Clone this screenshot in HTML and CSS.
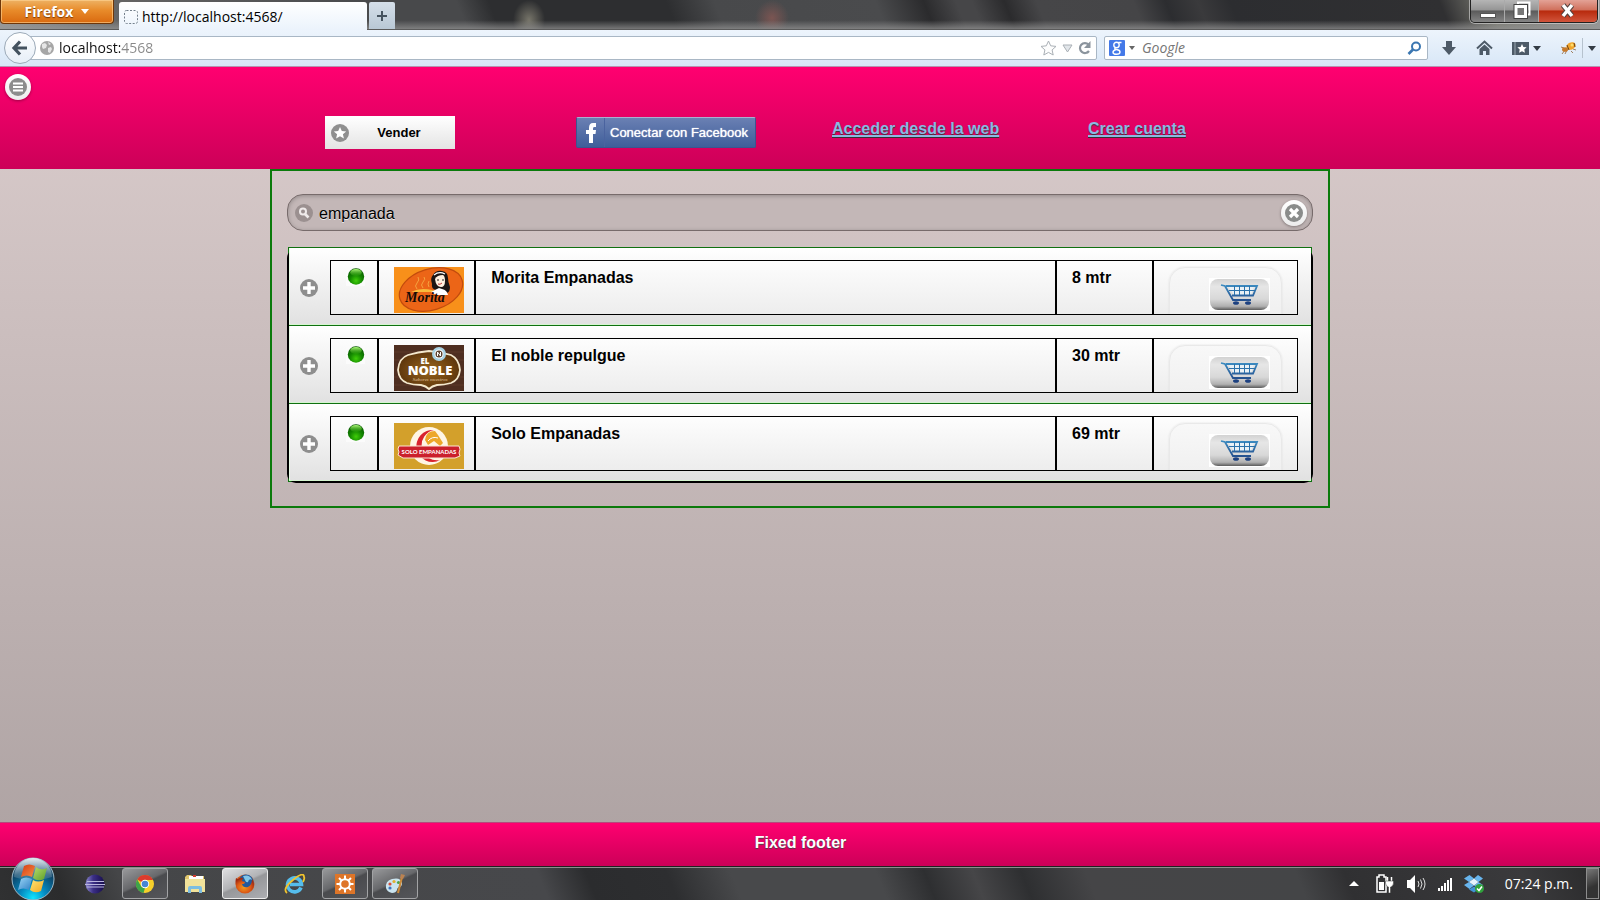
FILE: index.html
```html
<!DOCTYPE html>
<html lang="es">
<head>
<meta charset="utf-8">
<title>http://localhost:4568/</title>
<link rel="stylesheet" href="styles.css">
</head>
<body>
<svg class="defs" aria-hidden="true">
  <defs>
    <radialGradient id="g-ball" cx="50%" cy="75%" r="75%"><stop offset="0" stop-color="#3fce08"/><stop offset=".5" stop-color="#138600"/><stop offset="1" stop-color="#065400"/></radialGradient>
    <linearGradient id="g-shine" x2="0" y2="1"><stop offset="0" stop-color="#b5ff80"/><stop offset="1" stop-color="#38a811" stop-opacity=".2"/></linearGradient>
    <linearGradient id="g-btn" x2="0" y2="1"><stop offset="0" stop-color="#d2d2d2"/><stop offset=".25" stop-color="#e6e6e6"/><stop offset=".65" stop-color="#d8d8d8"/><stop offset=".88" stop-color="#b0b0b0"/><stop offset="1" stop-color="#5a5a5a"/></linearGradient>
    <linearGradient id="g-cart" gradientUnits="userSpaceOnUse" x1="0" y1="6" x2="0" y2="27"><stop offset="0" stop-color="#3d8fc4"/><stop offset="1" stop-color="#1d3f80"/></linearGradient>
    <radialGradient id="g-orb" cx="50%" cy="95%" r="90%"><stop offset="0" stop-color="#10e4ff"/><stop offset=".35" stop-color="#0589c0"/><stop offset=".75" stop-color="#0d4468"/><stop offset="1" stop-color="#5d7c90"/></radialGradient>
    <linearGradient id="g-orbtop" x2="0" y2="1"><stop offset="0" stop-color="#e4edf2"/><stop offset="1" stop-color="#6e97ad" stop-opacity=".25"/></linearGradient>
    <linearGradient id="g-ecl"><stop offset="0" stop-color="#8d88cf"/><stop offset=".4" stop-color="#3b2f86"/><stop offset="1" stop-color="#160c4c"/></linearGradient>
    <linearGradient id="g-red" x2="1" y2="1"><stop offset="0" stop-color="#d63d12"/><stop offset="1" stop-color="#f58b45"/></linearGradient>
    <linearGradient id="g-green" x2="1" y2="1"><stop offset="0" stop-color="#b6dc6b"/><stop offset="1" stop-color="#5c9e28"/></linearGradient>
    <linearGradient id="g-blue" x2="1" y2="1"><stop offset="0" stop-color="#9bd6f7"/><stop offset="1" stop-color="#2f7fc4"/></linearGradient>
    <linearGradient id="g-yellow" x2="1" y2="1"><stop offset="0" stop-color="#ffe474"/><stop offset="1" stop-color="#f4a71f"/></linearGradient>
    <radialGradient id="g-fox" cx="45%" cy="65%" r="60%"><stop offset="0" stop-color="#f09a1d"/><stop offset=".6" stop-color="#dc5a16"/><stop offset="1" stop-color="#a32a10"/></radialGradient>
    <radialGradient id="g-wood"><stop offset="0" stop-color="#99651c"/><stop offset="1" stop-color="#5f370d"/></radialGradient>
  </defs>
  <symbol id="ball" viewBox="0 0 19 19"><rect width="19" height="19" fill="#fbfbfb"/><circle cx="10" cy="9.500" r="8.200" fill="url(#g-ball)"/><ellipse cx="10" cy="5.500" rx="5.800" ry="3.600" fill="url(#g-shine)"/></symbol>
  <symbol id="cart" viewBox="0 0 61 33">
    <rect width="61" height="33" fill="#fff"/><rect x="1" y="1" width="59" height="31" rx="8" fill="url(#g-btn)"/>
    <path d="M19 8h26l-3 9H25z" fill="#e9f1f6"/>
    <path d="M12 7l4 1 8 14h18M17 8h31l-4 9.500H23" fill="none" stroke="url(#g-cart)" stroke-width="1.800"/>
    <path d="M20 12.500h26M25.500 8v9M30.500 8v9M35.500 8v9M40.500 8v9" stroke="#2b72ab" fill="none"/>
    <ellipse cx="27" cy="25" rx="3" ry="1.800" fill="#1d4180"/><ellipse cx="39" cy="25" rx="3" ry="1.800" fill="#1d4180"/>
  </symbol>
  <symbol id="plus" viewBox="0 0 18 18"><circle cx="9" cy="9" r="9" fill="#8e8e8e"/><path d="M9 3v12M3 9h12" stroke="#fff" stroke-width="3.400"/></symbol>
</svg>

<header class="titlebar">
  <button class="firefox">Firefox <span class="caret"></span></button>
  <div class="tab">
    <svg width="14" height="14" viewBox="0 0 14 14"><rect x=".5" y=".5" width="13" height="13" rx="2" fill="none" stroke="#74808c" stroke-dasharray="2 1.500"/></svg>
    <span>http://localhost:4568/</span>
  </div>
  <button class="newtab" aria-label="Nueva pestaña"><svg width="12" height="12" viewBox="0 0 12 12"><path d="M6 1v10M1 6h10" stroke="#46535f" stroke-width="2"/></svg></button>
  <div class="winbtns">
    <button class="win" aria-label="Minimizar"><svg width="18" height="20" viewBox="0 0 18 20"><rect x="1.500" y="12.500" width="15" height="4" fill="#fff" stroke="#555"/></svg></button>
    <button class="win" aria-label="Restaurar"><svg width="18" height="20" viewBox="0 0 18 20"><path d="M5 4V1.500h11.500v12H14" fill="none" stroke="#fff" stroke-width="2"/><path d="M3 5.500h9.500v10H3z" fill="#777" stroke="#444" stroke-width="5"/><path d="M3 5.500h9.500v10H3z" fill="#777" stroke="#fff" stroke-width="3"/></svg></button>
    <button class="win close" aria-label="Cerrar"><svg width="18" height="20" viewBox="0 0 18 20"><path d="M4 4l9 11M13 4L4 15" stroke="#55423e" stroke-width="5.500"/><path d="M4 4l9 11M13 4L4 15" stroke="#fff" stroke-width="3.500"/></svg></button>
  </div>
</header>

<nav class="navbar">
  <button class="back" aria-label="Atrás"><svg width="18" height="18" viewBox="0 0 18 18"><path d="M9 2.500L3 9l6 6.500M3 9h13" fill="none" stroke="#44525f" stroke-width="3.200"/></svg></button>
  <div class="urlbox">
    <svg width="14" height="14" viewBox="0 0 14 14"><circle cx="7" cy="7" r="7" fill="#a6a6a6"/><path d="M2 3l3-1 2 2-1 3-3 1-1-2zM8 7l3-1 1 2-2 4-2-1zM8 1l3 2-2 1z" fill="#e6e6e6"/></svg>
    <input class="url" type="text" aria-label="Dirección" value="localhost:4568">
    <svg width="17" height="16" viewBox="0 0 17 16"><path d="M8.500 1l2.200 4.800 5.300.6-3.900 3.500 1.100 5.100-4.700-2.600L3.800 15l1.100-5.100L1 6.400l5.300-.6z" fill="#fdfdfd" stroke="#aab0b6"/></svg>
    <svg width="11" height="9" viewBox="0 0 11 9"><path d="M1 1h9L5.500 8z" fill="#e2e6ea" stroke="#aab0b6"/></svg>
    <svg width="14" height="14" viewBox="0 0 14 14"><path d="M11 10a5 5 0 1 1-.5-6.500" fill="none" stroke="#8b949d" stroke-width="2.200"/><path d="M12.500 0v7H6z" fill="#8b949d"/></svg>
  </div>
  <div class="searchbox">
    <svg width="16" height="16" viewBox="0 0 16 16"><rect width="16" height="16" rx="1" fill="#4479e8"/><g fill="none" stroke="#fff" stroke-width="1.400"><circle cx="7.500" cy="5" r="2.700"/><path d="M9.500 2.500h3M6.500 7.700q-1.800 1.300 1 1.800 3.500.5 3.500 2.500 0 2.300-3.500 2.300T4 12.200q0-1.700 3-2.700"/></g></svg>
    <span class="caret tiny"></span>
    <input class="google" type="text" aria-label="Buscar" placeholder="Google">
    <svg width="15" height="15" viewBox="0 0 15 15"><circle cx="9" cy="5.500" r="4" fill="none" stroke="#3a76b1" stroke-width="2"/><path d="M6 8.500L1.500 13" stroke="#3a76b1" stroke-width="2.600"/></svg>
  </div>
  <div class="tools">
    <button aria-label="Descargas"><svg width="16" height="16" viewBox="0 0 16 16"><path d="M5 1h6v6h4l-7 8-7-8h4z" fill="#4d5a67"/></svg></button>
    <button aria-label="Inicio"><svg width="17" height="16" viewBox="0 0 17 16"><path d="M1 8.500L8.500 1.500 16 8.500" fill="none" stroke="#4d5a67" stroke-width="2"/><path d="M3.500 9l5-4.500 5 4.500v6H10v-4H7v4H3.500z" fill="#4d5a67"/></svg></button>
    <button aria-label="Marcadores"><svg width="17" height="15" viewBox="0 0 17 15"><path d="M0 1h17v13H0z" fill="#4d5a67"/><path d="M3 1v13" stroke="#9aa6b1"/><path d="M10 3l1.400 2.900 3.200.4-2.300 2.200.6 3.200L10 10.200l-2.900 1.500.6-3.200-2.300-2.200 3.200-.4z" fill="#fff"/></svg><span class="caret dark"></span></button>
    <button aria-label="Firebug"><svg width="16" height="14" viewBox="0 0 16 14"><path d="M1 6l3 1M2 13l3-4M5 13l2-4M11 10l2 2M13 8l3 1" stroke="#a08060"/><ellipse cx="11" cy="5" rx="4.800" ry="3.600" fill="#f1a52c" transform="rotate(-25 11 5)"/><ellipse cx="5" cy="8.500" rx="3" ry="2.300" fill="#c67a2b"/><path d="M7 4l2 5M14 2l1 4" stroke="#6b4013"/><circle cx="12" cy="4" r="1.500" fill="#fbdc6b"/></svg></button>
    <button class="more" aria-label="Más"><span class="caret dark"></span></button>
  </div>
</nav>

<section class="app">
  <header class="banner">
    <button class="menu" aria-label="Menú"><svg width="18" height="18" viewBox="0 0 18 18"><circle cx="9" cy="9" r="9" fill="#8c8c8c"/><path d="M4 5.500h10M4 9h10M4 12.500h10" stroke="#fff" stroke-width="2"/></svg></button>
    <div class="actions">
      <div><button class="vender"><svg width="18" height="18" viewBox="0 0 18 18"><circle cx="9" cy="9" r="9" fill="#8f8f8f"/><path d="M9 3l1.800 4 4.400.4-3.300 2.900 1 4.300L9 12.300l-3.900 2.300 1-4.300-3.300-2.900L7.200 7z" fill="#fff"/></svg><span>Vender</span></button></div>
      <div><button class="facebook"><span class="fb-mark"><svg width="10" height="20" viewBox="0 0 10 20"><path d="M3 20V11H0V7h3V5Q3 0 7 0h3v4H8Q7 4 7 5.500V7h3l-.5 4H7v9z" fill="#fff"/></svg></span><span class="fb-label">Conectar con Facebook</span></button></div>
      <div class="link"><a href="#web">Acceder desde la web</a></div>
      <div class="link"><a href="#crear">Crear cuenta</a></div>
    </div>
  </header>

  <main class="content">
    <div class="filter">
      <svg width="18" height="18" viewBox="0 0 18 18"><circle cx="9" cy="9" r="9" fill="#9b9090"/><circle cx="8" cy="7.500" r="3" fill="none" stroke="#efeaea" stroke-width="2"/><path d="M10 10l3.500 3.500" stroke="#efeaea" stroke-width="2.600"/></svg>
      <input type="text" aria-label="Filtrar" value="empanada">
      <button class="clear" aria-label="Borrar"><svg width="18" height="18" viewBox="0 0 18 18"><circle cx="9" cy="9" r="9" fill="#8a8c8b"/><path d="M5 5l8 8M13 5l-8 8" stroke="#fff" stroke-width="3.200"/></svg></button>
    </div>

    <ul class="list">
      <li class="row">
        <button class="expand" aria-label="Ver Morita Empanadas"><svg width="18" height="18"><use href="#plus"/></svg></button>
        <div class="cells">
          <div class="cell status"><svg width="19" height="19"><use href="#ball"/></svg></div>
          <div class="cell logo">
            <svg width="70" height="46" viewBox="0 0 70 46" role="img" aria-label="Morita">
              <rect width="70" height="46" fill="#f8901a"/><ellipse cx="37" cy="22.500" rx="32.500" ry="20.500" transform="rotate(-17 37 22.500)" fill="#ec6517" stroke="#c24b0d" stroke-width="1.200"/>
              <path d="M23 22q-3-3 0-6t1-6M29 21q-3-3 0-6t1-5M35 20q-2-3 0-6" stroke="#f5a33e" fill="none"/><path d="M17 25q9-5 21-2l6 2z" fill="#f8bb3c"/>
              <path d="M38 17q-2-6 1-9 3-5 9-4 6 1 6 7 0 4 2 9 0 5-3 6l-4-3h-7q-5-1-4-6z" fill="#1c1514"/>
              <path d="M41 12q2-4 8-4 2 1 2 6 0 6-4 6-5 0-6-8z" fill="#fff0df"/><path d="M43 13h2M48 13h2" stroke="#222" stroke-width="1.200"/><path d="M44 17q2 1 4-1" stroke="#b33" fill="none"/><path d="M40 8q5-4 11-1" stroke="#fff" stroke-width="1.200" fill="none"/>
              <path d="M37 25l8-4 3 1q5 1 6 6H43q-4-1-6-3z" fill="#fff"/>
              <text x="11" y="35" font-family="Liberation Serif, serif" font-size="14" font-weight="bold" font-style="italic" fill="#160b08">Morita</text>
            </svg>
          </div>
          <div class="cell"><h3>Morita Empanadas</h3></div>
          <div class="cell"><p>8 mtr</p></div>
          <div class="cell action"><button class="buy" aria-label="Comprar en Morita Empanadas"><svg width="61" height="33"><use href="#cart"/></svg></button></div>
        </div>
      </li>
      <li class="row">
        <button class="expand" aria-label="Ver El noble repulgue"><svg width="18" height="18"><use href="#plus"/></svg></button>
        <div class="cells">
          <div class="cell status"><svg width="19" height="19"><use href="#ball"/></svg></div>
          <div class="cell logo">
            <svg width="70" height="46" viewBox="0 0 70 46" role="img" aria-label="El Noble">
              <rect width="70" height="46" fill="#4e2e20"/><path d="M0 7h70M0 15h70M0 32h70M0 40h70" stroke="#5d3928"/>
              <path d="M4 25Q5 13 14 10 24 7 35 6q12 1 22 4 8 4 9 15-1 10-9 13-7 2-14 2-5 1-8 4-3-3-8-4-8 0-14-2-8-3-9-13z" fill="url(#g-wood)" stroke="#f4e8cd" stroke-width="1.800"/>
              <circle cx="45" cy="9" r="7" fill="#a9d2e2"/><circle cx="45" cy="9" r="4.500" fill="#fff"/><circle cx="45" cy="9" r="3.500" fill="#59402c"/><path d="M43.500 11V7l3 4V7" fill="none" stroke="#fff"/>
              <text x="31" y="19" text-anchor="middle" font-family="Open Sans, sans-serif" font-size="8" font-weight="800" fill="#fff">EL</text>
              <text x="36" y="30" text-anchor="middle" font-family="Open Sans, sans-serif" font-size="13" font-weight="800" fill="#fff">NOBLE</text>
              <text x="36" y="36" text-anchor="middle" font-family="Liberation Serif, serif" font-size="5" font-style="italic" fill="#c5a276">Sabores nuestros</text>
            </svg>
          </div>
          <div class="cell"><h3>El noble repulgue</h3></div>
          <div class="cell"><p>30 mtr</p></div>
          <div class="cell action"><button class="buy" aria-label="Comprar en El noble repulgue"><svg width="61" height="33"><use href="#cart"/></svg></button></div>
        </div>
      </li>
      <li class="row">
        <button class="expand" aria-label="Ver Solo Empanadas"><svg width="18" height="18"><use href="#plus"/></svg></button>
        <div class="cells">
          <div class="cell status"><svg width="19" height="19"><use href="#ball"/></svg></div>
          <div class="cell logo">
            <svg width="70" height="46" viewBox="0 0 70 46" role="img" aria-label="Solo Empanadas">
              <rect width="70" height="46" fill="#d3a02b"/><circle cx="35" cy="23" r="19" fill="#fff5e4"/><path d="M40 7A16 16 0 1 0 46 37 14.500 14.500 0 1 1 40 7z" fill="#d9232e"/>
              <path d="M31 17q1-9 10-9l3 4 5 8-3 3-6-5-6 4z" fill="#eda72a"/><path d="M34 18q4-5 10-3" stroke="#fff" fill="none"/>
              <path d="M5 23h60q2 3 0 7l1 3-5 2H9l-5-3 1-3q-2-3 0-6z" fill="#cb202c" stroke="#fae5d3"/>
              <text x="35" y="31" text-anchor="middle" font-family="Lato, sans-serif" font-size="6" font-weight="bold" fill="#fff">SOLO EMPANADAS</text>
            </svg>
          </div>
          <div class="cell"><h3>Solo Empanadas</h3></div>
          <div class="cell"><p>69 mtr</p></div>
          <div class="cell action"><button class="buy" aria-label="Comprar en Solo Empanadas"><svg width="61" height="33"><use href="#cart"/></svg></button></div>
        </div>
      </li>
    </ul>
  </main>

  <footer class="fixed-footer">Fixed footer</footer>
</section>

<footer class="taskbar">
  <button class="start" aria-label="Inicio"><svg width="44" height="44" viewBox="0 0 44 44">
    <circle cx="22" cy="22" r="21" fill="url(#g-orb)" stroke="#9db9c8"/><path d="M3 20a19 19 0 0 1 38 0q-19 7-38 0z" fill="url(#g-orbtop)"/>
    <path d="M13 9q5-3 11 0l-3 11q-5-3-11 0z" fill="url(#g-red)"/><path d="M25 10q5 4 11 1l-3 11q-6 3-11-1z" fill="url(#g-green)"/><path d="M10 22q5-3 11 0l-3 11q-6-3-11 0z" fill="url(#g-blue)"/><path d="M22 23q5 3 11 0l-3 11q-6 3-11-1z" fill="url(#g-yellow)"/></svg></button>
  <div class="tasks">
    <button class="task" aria-label="Eclipse"><svg width="20" height="20" viewBox="0 0 20 20"><circle cx="10" cy="10" r="9.500" fill="url(#g-ecl)"/><path d="M2 7.500h17M0 10.500h20M2 13h17" stroke="#b9b5de" stroke-width="1"/></svg></button>
    <button class="task open" aria-label="Chrome"><svg width="18" height="18" viewBox="0 0 18 18"><circle cx="9" cy="9" r="9" fill="#f6cf2b"/><path d="M9 9L1.200 4.500A9 9 0 0 1 17 5H9z" fill="#dc3b2d"/><path d="M1.200 4.500L5.500 12l3.500 1-1.500 5A9 9 0 0 1 1.200 4.500z" fill="#3da44a"/><circle cx="9" cy="9" r="4.200" fill="#fff"/><circle cx="9" cy="9" r="3.300" fill="#4785d4"/></svg></button>
    <button class="task" aria-label="Explorador"><svg width="20" height="20" viewBox="0 0 20 20"><path d="M0 3l2-2h4l1 1h12v15H0z" fill="#dfc56c"/><path d="M4 2h14v3H4z" fill="#fff"/><path d="M8 2h3" stroke="#d33c31" stroke-width="2"/><path d="M0 5h20v13H0z" fill="#f1e29a"/><path d="M3 19v-5q0-2 2-2h10q2 0 2 2v5h-3v-4H6v4z" fill="#7cbde1"/></svg></button>
    <button class="task open active" aria-label="Firefox"><svg width="20" height="20" viewBox="0 0 20 20"><circle cx="10" cy="10" r="9.500" fill="#d75a17"/><circle cx="11" cy="8" r="7.600" fill="#215a9d"/><path d="M8 2q7-2 9 4-3-2-4 2-2 1-3-2z" fill="#82c6e9"/><path d="M1 4l2 1q2-2 5-1-1 2-1 3l3 1q0 2-3 2 1 4 6 3 4-2 4-8 4 6 0 11-6 5-12 1Q-1 12 1 4z" fill="url(#g-fox)"/></svg></button>
    <button class="task" aria-label="Internet Explorer"><svg width="22" height="20" viewBox="0 0 22 20"><path d="M17 13.500A7 7 0 1 1 17.500 10.500H6" fill="none" stroke="#55bdec" stroke-width="3.600"/><path d="M3 19Q-2 15 9 6t11-3q1 1-1 5" fill="none" stroke="#f1c42e" stroke-width="1.800"/></svg></button>
    <button class="task open" aria-label="Servidor"><svg width="20" height="20" viewBox="0 0 20 20"><rect width="20" height="20" fill="#de7528"/><circle cx="10" cy="10" r="4.800" fill="none" stroke="#fff" stroke-width="2"/><path d="M10 1.500v3.500M10 15v3.500M1.500 10H5M15 10h3.500M4 4l2.500 2.500M13.500 13.500L16 16M16 4l-2.500 2.500M6.500 13.500L4 16" stroke="#fff" stroke-width="2"/></svg></button>
    <button class="task open" aria-label="Paint"><svg width="20" height="20" viewBox="0 0 20 20"><path d="M1 14Q0 7 7 5q9-2 10 4 0 4-3 4-2 1-2 3-1 3-5 3-5-1-6-5z" fill="#cbe4ef"/><circle cx="5" cy="10" r="1.600" fill="#d64d3a"/><circle cx="9" cy="7.500" r="1.600" fill="#e3ae2e"/><circle cx="13.500" cy="8.500" r="1.600" fill="#4aa34a"/><circle cx="5" cy="14" r="1.600" fill="#3e73be"/><path d="M17 3l-4 16" stroke="#cb8a3b" stroke-width="2"/><path d="M15 4l1-4 4 1-2 4z" fill="#b98252"/></svg></button>
  </div>
  <div class="tray">
    <span class="up"></span>
    <svg width="20" height="20" viewBox="0 0 20 20"><path d="M2 3h2V1h5v2h2v15H2z" fill="none" stroke="#fff" stroke-width="1.500"/><path d="M4 8h5v8H4z" fill="#fff"/><path d="M12.500 3v4M16.500 3v4" stroke="#fff" stroke-width="1.500"/><path d="M10.500 7h8v2q0 3-3 4v6h-2v-6q-3-1-3-4z" fill="#fff" stroke="#333" stroke-width=".5"/></svg>
    <svg width="20" height="20" viewBox="0 0 20 20"><path d="M1 6h3l5-5v18l-5-5H1z" fill="#fff"/><path d="M12 7q2 3 0 6M14.500 5.500q3 4.500 0 9M17 4q4 6 0 12" fill="none" stroke="#ddd"/></svg>
    <svg width="16" height="16" viewBox="0 0 16 16"><path d="M1 12h2v3H1zM4 10h2v5H4zM7 7h2v8H7zM10 4h2v11h-2zM13 2h2v13h-2z" fill="#fff"/></svg>
    <svg width="20" height="20" viewBox="0 0 20 20"><path d="M5.500 1L10 4.500 5 8 0 4.500zM14 1l5 3.500L14.500 8 10 4.500zM0 11l5-3 5 3.500L5.500 15zM19 11l-4.500-3L10 11.500l4.500 3.500z" fill="#67b5ee"/><path d="M10 4.500L14.500 8 10 11.500 5 8z" fill="#e6f4fd"/><path d="M10 12.500l4 3-4 3-5-3z" fill="#3f93d4"/><circle cx="15.500" cy="14.500" r="4.500" fill="#30a23c"/><path d="M13 14.500l2 2 3-4" fill="none" stroke="#fff" stroke-width="1.500"/></svg>
    <time>07:24 p.m.</time>
  </div>
  <button class="desktop" aria-label="Mostrar escritorio"></button>
</footer>
</body>
</html>
```

FILE: styles.css
```css
* { box-sizing: border-box; }

body {
  margin: 0;
  min-height: 100vh;
  display: flex;
  flex-direction: column;
  font: 16px/20px "Liberation Sans", Arial, sans-serif;
  color: #000;
}

button { border: 0; padding: 0; background: none; font: inherit; color: inherit; }
input { border: 0; outline: 0; padding: 0; background: none; font: inherit; min-width: 0; flex: 1; text-shadow: inherit; }
svg { display: block; flex: none; }
.defs { position: absolute; width: 0; height: 0; }

.caret {
  border: 4px solid transparent;
  border-top: 5px solid #fff;
  border-bottom: 0;
}
.caret.tiny { border-width: 4px 3px 0; border-top-color: #666; }
.caret.dark { border-top-color: #333c45; }

/* Browser window */
.titlebar {
  display: flex;
  align-items: flex-start;
  height: 30px;
  border-bottom: 1px solid #5b5b5b;
  font: 14px/20px "Open Sans", "Noto Sans", sans-serif;
  background:
    linear-gradient(to bottom, transparent 70%, rgba(150, 150, 150, .7)),
    radial-gradient(ellipse 16px 20px at 529px 20px, #77756a, transparent),
    radial-gradient(ellipse 17px 18px at 772px 18px, #7b5552, transparent),
    linear-gradient(68deg, #999 0, #666 7%, #48494b 24%, #48494b 29%, #2d2e30 31%, #2d2e30 42%, #48494b 45%, #4a4b4d 55%, #2b2b2d 58%, #464648 60%, #464648 61%, #2b2b2d 63%, #464648 65%, #454547 71%, #2c2d30 73%, #3a3a3c 75%, #2c2d30 77%, #303032 90%, #77776f 93%, #999 100%);
}
.firefox {
  display: flex;
  align-items: center;
  justify-content: center;
  gap: 8px;
  width: 114px;
  height: 24px;
  border: 1px solid #6f3608;
  border-top: 0;
  border-radius: 0 0 4px 4px;
  background: linear-gradient(#eeb264, #e88b2a 45%, #d9690f);
  box-shadow: inset 0 0 0 1px rgba(255, 214, 150, .6);
  color: #fff;
  font-weight: bold;
  text-shadow: 0 1px 1px #7a3a05;
}
.tab {
  display: flex;
  align-items: center;
  gap: 4px;
  width: 248px;
  height: 28px;
  margin: 2px 2px 0 5px;
  padding: 2px 5px 0;
  border-radius: 3px 3px 0 0;
  background: linear-gradient(#fff, #ebf3fc);
}
.newtab {
  display: flex;
  align-items: center;
  justify-content: center;
  width: 26px;
  height: 27px;
  margin-top: 2px;
  border-radius: 2px 2px 0 0;
  background: linear-gradient(#d5dfe9, #b9c8d5);
}
.winbtns {
  display: flex;
  height: 23px;
  margin: 0 2px 0 auto;
  border: 1px solid #222;
  border-top: 0;
  border-radius: 0 0 5px 5px;
  overflow: hidden;
  box-shadow: 0 0 0 1px rgba(220, 220, 220, .6);
}
.win {
  display: flex;
  align-items: center;
  justify-content: center;
  width: 34px;
  border-right: 1px solid #aaa;
  background: linear-gradient(#b5b5b5, #959595 45%, #5b5b5b 50%, #858585);
}
.win.close { width: 58px; border: 0; background: linear-gradient(#e3a296, #d0705c 45%, #b82a0d 50%, #d1543b); }

.navbar {
  display: flex;
  align-items: center;
  height: 37px;
  padding: 0 6px 0 4px;
  background: linear-gradient(#edf4fc, #d8e7f7);
  border-bottom: 1px solid #b693b0;
  font: 14px/20px "Open Sans", "Noto Sans", sans-serif;
}
.back {
  display: flex;
  align-items: center;
  justify-content: center;
  width: 32px;
  height: 32px;
  border: 1px solid #9caab8;
  border-radius: 50%;
  background: linear-gradient(#fff, #e6eef7);
  z-index: 1;
}
.urlbox, .searchbox {
  display: flex;
  align-items: center;
  height: 24px;
  border: 1px solid #a9b7c5;
  border-radius: 2px;
  background: #fff;
}
.urlbox { flex: 1; gap: 5px; margin-left: -8px; padding: 0 4px 0 11px; }
.url {
  background: linear-gradient(90deg, #111 61px, #888 61px) text;
  color: transparent;
}
.searchbox { width: 324px; margin-left: 7px; padding: 0 5px 0 4px; gap: 4px; }
.google { margin-left: 3px; font-style: italic; }
.google::placeholder { color: #757575; opacity: 1; }
.tools { display: flex; align-items: center; gap: 19px; margin-left: 13px; }
.tools button { display: flex; align-items: center; gap: 4px; }
.tools .more { height: 20px; margin: 0 -2px 0 -13px; padding-left: 5px; border-left: 1px solid #b6c2ce; }

/* Page */
.app {
  flex: 1;
  display: flex;
  flex-direction: column;
  background: linear-gradient(#dacccc, #ada2a2);
}
.banner {
  height: 102px;
  padding: 7px 5px;
  background: linear-gradient(#ff0070, #cc0058);
}
.menu, .clear {
  display: flex;
  align-items: center;
  justify-content: center;
  width: 26px;
  height: 26px;
  border-radius: 50%;
  background: linear-gradient(#fff, #ececec);
  box-shadow: 0 1px 3px rgba(0, 0, 0, .35);
}
.actions {
  display: grid;
  grid-template-columns: repeat(4, 16vw);
  align-items: start;
  margin: 16px 0 0 calc(20vw - 5px);
}
.vender {
  display: flex;
  align-items: center;
  width: 130px;
  height: 33px;
  margin-left: 5px;
  padding: 0 6px;
  background: linear-gradient(#fff, #e4e4e4);
  font-size: 13px;
  font-weight: bold;
}
.vender span { flex: 1; }
.facebook {
  display: flex;
  width: 180px;
  height: 31px;
  margin-top: 1px;
  border: 1px solid #3b5590;
  border-top-color: #aab0d0;
  border-radius: 2px;
  background: linear-gradient(#6a80b3, #3f5e9a);
  color: #fff;
  font-size: 13px;
  line-height: 30px;
  text-shadow: 0 0 1px #fff;
}
.fb-mark { display: flex; align-items: center; justify-content: center; width: 28px; border-right: 1px solid #4a639f; }
.fb-label { flex: 1; padding-left: 5px; text-align: left; white-space: nowrap; }
.link { padding-top: 3px; font-weight: bold; white-space: nowrap; }
.link a {
  color: #8cb8e2;
  text-decoration-thickness: 2px;
  text-shadow: 0 1px 1px #333;
}

.content {
  width: 66.25%;
  margin: 0 auto;
  padding: 23px 15px 24px;
  border: 2px solid #0b7a0b;
}
.filter {
  display: flex;
  align-items: center;
  gap: 6px;
  height: 37px;
  padding: 0 5px 0 7px;
  border: 1px solid #776b6b;
  border-radius: 16px;
  background: #c3b7b7;
  box-shadow: inset 0 1px 4px rgba(0, 0, 0, .25);
  text-shadow: 0 1px 0 #eee;
}
.filter input { padding-top: 2px; }

.list {
  position: relative;
  z-index: 0;
  list-style: none;
  margin: 16px 1px 0;
  padding: 0;
  border: 1px solid #107010;
}
.list::before {
  content: "";
  position: absolute;
  inset: 1px -2px -2px;
  z-index: -1;
  border-radius: 9px;
  background: #000;
}
.row {
  display: flex;
  align-items: center;
  padding: 12px 13px 10px 11px;
  background: linear-gradient(#fff, #e1e1e1);
  box-shadow: inset 0 -1px 0 #d5f5d0, inset 1px 0 0 #e8fbe5;
}
.row + .row { border-top: 1px solid #107010; }
.expand { width: 18px; margin-right: 12px; }
.cells {
  flex: 1;
  display: grid;
  grid-template-columns: 5fr 10fr 60fr 10fr 15fr;
  height: 55px;
  font-weight: bold;
}
.cell {
  min-width: 0;
  padding: 6px 15px 0;
  border: 1px solid #000;
  background: linear-gradient(#fdfdfd, #ededed);
  overflow: hidden;
}
.cell h3, .cell p { margin: 0; padding-top: 1px; font-size: 16px; line-height: 20px; }
.buy {
  display: flex;
  justify-content: flex-end;
  width: 100%;
  height: 60px;
  padding: 10px 11px 0 0;
  border: 1px solid #e9e9e9;
  border-radius: 16px 16px 0 0;
  background: linear-gradient(#f8f8f8, #eee);
  box-shadow: 0 0 2px #ddd;
}

.fixed-footer {
  margin-top: auto;
  padding: 10px 0 13px 1px;
  border-top: 1px solid #b5497c;
  background: linear-gradient(#ff0070, #cc0058);
  color: #fff;
  font-weight: bold;
  text-align: center;
  text-shadow: 0 1px 1px #444;
}

/* Taskbar */
.taskbar {
  display: flex;
  align-items: stretch;
  height: 34px;
  border-top: 1px solid #222;
  box-shadow: inset 0 1px 0 #8c8c8c;
  background: linear-gradient(68deg, #303132, #2b2c2d 4%, #454648 8%, #47484b 34%, #2b2c2e 37%, #2d2e30 42%, #48494b 46%, #48494b 55%, #2e2f31 58%, #464648 61%, #2e2f31 64%, #454547 68%, #444547 81%, #303032 84%, #3a3a3c 95%, #29292a);
  font: 14px/20px "Open Sans", "Noto Sans", sans-serif;
  color: #fff;
}
.start { width: 44px; height: 44px; margin: -10px 17px 0 11px; align-self: flex-start; z-index: 1; }
.tasks { display: flex; gap: 4px; }
.task { display: flex; align-items: center; justify-content: center; width: 46px; margin: 1px 0; border-radius: 3px; }
.task.open { border: 1px solid #a2a3a5; background: linear-gradient(155deg, #98999b, #67686b 45%, #4a4b4e 50%, #55565a); }
.task.active { border-color: #ededed; background: linear-gradient(155deg, #dfdfe1, #b2b3b6 45%, #96979a 50%, #adaeb2); }
.tray { display: flex; align-items: center; gap: 11px; margin-left: auto; }
.tray time { margin-left: 10px; padding-top: 1px; white-space: nowrap; }
.up { border: 5px solid transparent; border-top: 0; border-bottom-color: #fff; margin-right: 5px; }
.desktop { width: 13px; margin: 1px 1px 1px 13px; border: 1px solid #8d8d8d; background: linear-gradient(155deg, #777, #333 60%); }
```
